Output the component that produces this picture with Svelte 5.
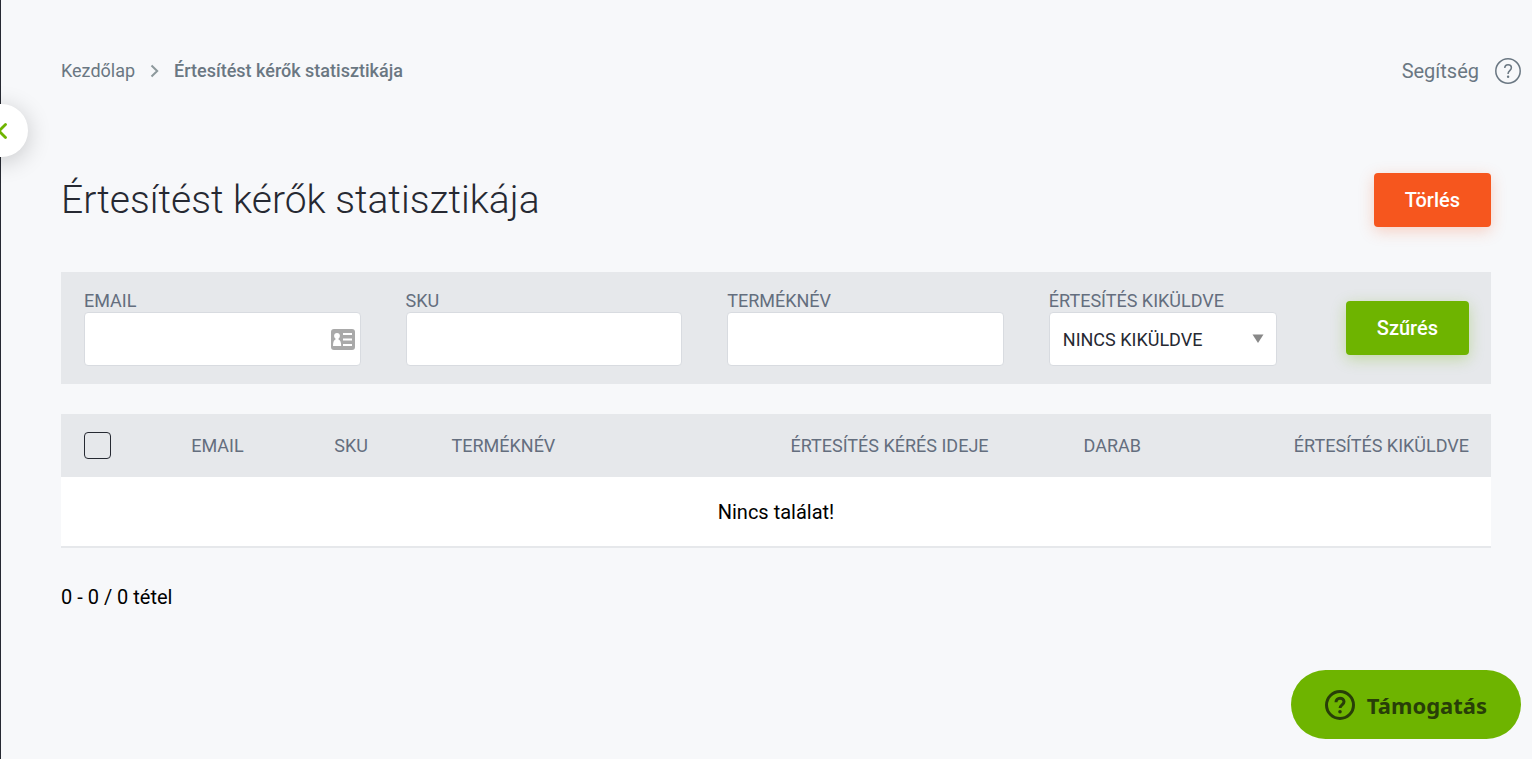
<script>
  let email = $state("");
  let sku = $state("");
  let productName = $state("");
  let sent = $state("0");
  let allSelected = $state(false);

  const columns = [
    { key: "email", label: "Email" },
    { key: "sku", label: "SKU" },
    { key: "name", label: "Terméknév" },
    { key: "requested", label: "Értesítés kérés ideje" },
    { key: "count", label: "Darab" },
    { key: "sent", label: "Értesítés kiküldve" },
  ];
</script>

<div class="page">
  <button class="sidebar-toggle" aria-label="Menü">
    <svg width="12" height="18" viewBox="0 0 12 18">
      <path d="M10.500 2.500 4 9l6.500 6.500" />
    </svg>
  </button>

  <header class="topbar">
    <nav class="breadcrumb">
      <a href="#home">Kezdőlap</a>
      <svg width="9" height="14" viewBox="0 0 9 14">
        <path d="M1.500 1.500 7.200 7l-5.700 5.500" />
      </svg>
      <a href="#stats" class="current">Értesítést kérők statisztikája</a>
    </nav>
    <a href="#help" class="help">
      Segítség
      <svg width="26" height="26" viewBox="0 0 26 26">
        <circle cx="13" cy="13" r="12.200" />
        <path d="M9.800 10.100c0-2 1.400-3.300 3.300-3.300s3.300 1.200 3.300 3c0 2.700-3.300 2.900-3.300 5.700v.6" />
        <circle class="dot" cx="13.100" cy="18.800" r="1.200" />
      </svg>
    </a>
  </header>

  <main>
    <div class="heading">
      <h1>Értesítést kérők statisztikája</h1>
      <button class="btn danger">Törlés</button>
    </div>

    <form class="filter" onsubmit={(e) => e.preventDefault()}>
      <div class="field">
        <label for="email">Email</label>
        <div class="control">
          <input id="email" type="text" bind:value={email} />
          <svg class="card-icon" width="24" height="21" viewBox="0 0 24 21">
            <rect width="24" height="21" rx="3" fill="#a9a9a9" />
            <circle cx="6" cy="6.800" r="2.900" fill="#fff" />
            <path d="M4.500 8h3v2.500c1.800.8 2.700 2.500 2.700 6.500H2c0-4 .8-5.700 2.500-6.500z" fill="#fff" />
            <path d="M12 5h9M12 10.500h9M12 16h9" stroke="#fff" stroke-width="2.200" />
          </svg>
        </div>
      </div>
      <div class="field">
        <label for="sku">SKU</label>
        <input id="sku" type="text" bind:value={sku} />
      </div>
      <div class="field">
        <label for="name">Terméknév</label>
        <input id="name" type="text" bind:value={productName} />
      </div>
      <div class="field">
        <label for="sent">Értesítés kiküldve</label>
        <div class="control">
          <select id="sent" bind:value={sent}>
            <option value="0">NINCS KIKÜLDVE</option>
            <option value="1">KIKÜLDVE</option>
          </select>
          <svg class="arrow" width="12" height="9" viewBox="0 0 12 9">
            <path d="M.5.500h11L6 9z" fill="#888" />
          </svg>
        </div>
      </div>
      <button class="btn primary">Szűrés</button>
    </form>

    <table>
      <thead>
        <tr>
          <th class="check">
            <input type="checkbox" aria-label="Összes kijelölése" bind:checked={allSelected} />
          </th>
          {#each columns as column}
            <th class={column.key}>{column.label}</th>
          {/each}
        </tr>
      </thead>
      <tbody>
        <tr>
          <td colspan={columns.length + 1}>Nincs találat!</td>
        </tr>
      </tbody>
    </table>

    <p class="count-info">0 - 0 / 0 tétel</p>
  </main>

  <button class="support">
    <svg width="30" height="30" viewBox="0 0 30 30">
      <circle cx="15" cy="15" r="13.500" />
      <path d="M11 12.200c0-2.400 1.700-4 4-4s4 1.500 4 3.600c0 2.900-3.900 3.200-3.900 6.200" />
      <circle class="dot" cx="15" cy="21.800" r="1.800" />
    </svg>
    Támogatás
  </button>
</div>

<style>
  :global(body) {
    background: #f7f8fa;
  }

  .page {
    position: relative;
    box-sizing: border-box;
    min-height: 100vh;
    padding: 56px 0 0 60px;
    border-left: 1px solid #262932;
    font-family: Roboto, "Liberation Sans", sans-serif;
    font-size: 20px;
    line-height: 24px;
    color: #000;
  }

  button,
  input,
  select,
  th,
  td {
    box-sizing: border-box;
    margin: 0;
    font-family: inherit;
  }

  button {
    cursor: pointer;
  }

  a {
    color: #6a7782;
    text-decoration: none;
  }

  .sidebar-toggle {
    position: absolute;
    top: 104px;
    left: -26px;
    width: 53px;
    height: 53px;
    padding: 0 0 0 20px;
    display: flex;
    align-items: center;
    border: 0;
    border-radius: 50%;
    background: #fff;
    box-shadow: 0 4px 24px rgba(0, 0, 0, 0.2);
  }

  .sidebar-toggle path {
    fill: none;
    stroke: #6eb400;
    stroke-width: 2.8;
    stroke-linecap: round;
  }

  .topbar {
    display: flex;
    align-items: center;
    justify-content: space-between;
    height: 30px;
    padding-right: 11px;
  }

  .breadcrumb {
    display: flex;
    align-items: center;
    gap: 15px;
    font-size: 18px;
  }

  .breadcrumb path {
    fill: none;
    stroke: #8d999c;
    stroke-width: 2;
  }

  .current {
    font-weight: 500;
  }

  .help {
    display: flex;
    align-items: center;
    gap: 16px;
  }

  .help svg {
    fill: none;
    stroke: #6a7782;
    stroke-width: 1.5;
  }

  .help .dot {
    fill: #6a7782;
    stroke: none;
  }

  main {
    padding: 87px 41px 0 0;
  }

  .heading {
    display: flex;
    align-items: center;
    justify-content: space-between;
    margin-bottom: 45px;
  }

  h1 {
    margin: 0;
    font-size: 39px;
    line-height: 54px;
    font-weight: 300;
    color: #262932;
  }

  .btn {
    height: 54px;
    padding: 0 31px;
    border: 0;
    border-radius: 4px;
    font-size: 20px;
    font-weight: 500;
    color: #fff;
  }

  .danger {
    background: #f6561e;
    box-shadow: 0 4px 15px rgba(246, 86, 30, 0.25);
  }

  .primary {
    margin-left: 24px;
    background: #6eb400;
    box-shadow: 0 4px 15px rgba(110, 180, 0, 0.3);
  }

  .filter {
    display: grid;
    grid-template-columns: 1fr 1fr 1fr 228px auto;
    align-items: center;
    gap: 45px;
    margin-bottom: 30px;
    padding: 18px 22px 18px 23px;
    background: #e6e8eb;
  }

  .field {
    min-width: 0;
  }

  label {
    display: block;
    font-size: 18px;
    line-height: 22px;
    text-transform: uppercase;
    color: #646e7e;
  }

  .control {
    position: relative;
  }

  .field input,
  select {
    display: block;
    width: 100%;
    height: 54px;
    padding: 0 13px;
    border: 1px solid #d8dbe0;
    border-radius: 4px;
    background: #fff;
    font-size: 18px;
    color: #262932;
  }

  select {
    appearance: none;
  }

  .card-icon {
    position: absolute;
    top: 17px;
    right: 6px;
  }

  .arrow {
    position: absolute;
    top: 22px;
    right: 13px;
    pointer-events: none;
  }

  table {
    width: 100%;
    table-layout: fixed;
    border-collapse: collapse;
  }

  th {
    height: 63px;
    padding: 0 0 0 23px;
    background: #e6e8eb;
    font-size: 18px;
    font-weight: 400;
    text-align: left;
    text-transform: uppercase;
    color: #646e7e;
  }

  .check {
    width: 7.5%;
  }

  .check input {
    display: block;
    width: 27px;
    height: 27px;
    appearance: none;
    border: 1px solid #262932;
    border-radius: 4px;
  }

  .check input:checked {
    background: #6eb400;
  }

  .email {
    width: 10%;
  }

  .sku {
    width: 8.2%;
  }

  .name {
    width: 23.7%;
  }

  .requested {
    width: 20.5%;
  }

  .count {
    width: 12%;
  }

  .sent {
    padding: 0 22px 0 0;
    text-align: right;
  }

  td {
    height: 70px;
    padding: 0;
    border-bottom: 2px solid #e6e8eb;
    background: #fff;
    text-align: center;
  }

  .count-info {
    margin: 37px 0 0;
  }

  .support {
    position: fixed;
    right: 11px;
    bottom: 20px;
    display: flex;
    align-items: center;
    gap: 12px;
    height: 69px;
    padding: 0 34px;
    border: 0;
    border-radius: 35px;
    background: #6eb400;
    font-family: "Noto Sans", "Open Sans", sans-serif;
    font-size: 22px;
    font-weight: 700;
    color: #283e08;
  }

  .support svg {
    fill: none;
    stroke: #283e08;
    stroke-width: 3;
  }

  .support .dot {
    fill: #283e08;
    stroke: none;
  }
</style>
